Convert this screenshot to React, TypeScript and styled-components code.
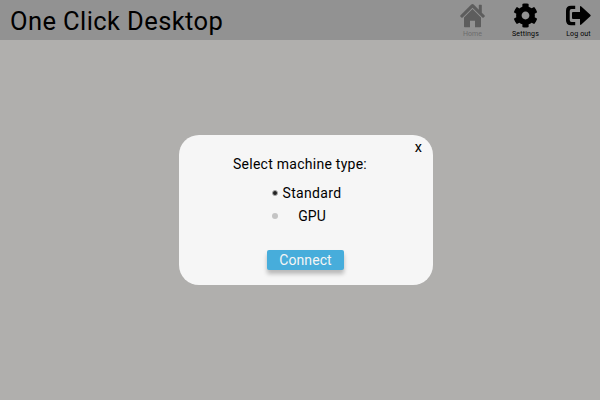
import React from "react";
import styled, { createGlobalStyle } from "styled-components";
import { FaCog } from "react-icons/fa";

const GlobalStyle = createGlobalStyle`
  * { box-sizing: border-box; }
  body { margin: 0; font-family: Roboto, "Noto Sans", sans-serif; color: #000; }
`;
const Page = styled.div`
  display: flex;
  flex-direction: column;
  width: 600px;
  height: 400px;
  overflow: hidden;
  background: #b0afad;
`;
const Header = styled.header`
  display: flex;
  justify-content: space-between;
  flex: 0 0 40px;
  height: 40px;
  padding-left: 10px;
  background: #929292;
`;
const Title = styled.h1`
  margin: 0;
  padding-top: 2px;
  font-size: 25.5px;
  font-weight: 400;
  line-height: 38px;
  letter-spacing: 0.4px;
  white-space: nowrap;
`;
const Nav = styled.nav`
  display: flex;
  margin-right: -5px;
`;
const NavItem = styled.div<{ $muted?: boolean; $spacing: number }>`
  display: flex;
  flex-direction: column;
  align-items: center;
  width: 53px;
  color: ${(p) => (p.$muted ? "#5d5d5d" : "#000")};
  svg { display: block; width: 25px; height: 25px; margin-top: 3px; }
  span {
    margin-top: 1px;
    font-size: 7px;
    line-height: 10px;
    letter-spacing: ${(p) => p.$spacing}px;
    opacity: ${(p) => (p.$muted ? 0.7 : 1)};
    white-space: nowrap;
  }
`;
const Main = styled.main`
  display: flex;
  flex: 1;
  align-items: flex-start;
  padding: 95px 0 0 179px;
`;
const Dialog = styled.section`
  display: flex;
  flex-direction: column;
  width: 254px;
  height: 150px;
  border-radius: 20px;
  background: #f6f6f6;
`;
const Close = styled.button`
  align-self: flex-end;
  height: 16px;
  margin: 5px 11px 0 0;
  padding: 0;
  border: 0;
  background: none;
  font: 400 14.5px/16px Roboto, sans-serif;
  color: #000;
`;
const Prompt = styled.p`
  margin: -2px 0 0 54px;
  font-size: 14px;
  line-height: 20px;
  letter-spacing: 0.26px;
  white-space: nowrap;
`;
const Options = styled.div`
  display: flex;
  flex-direction: column;
  margin: 8px 0 0 93px;
`;
const Option = styled.label`
  display: flex;
  align-items: center;
  height: 23px;
`;
const Dot = styled.i<{ $selected?: boolean }>`
  width: 6px;
  height: 6px;
  margin-top: -1px;
  border-radius: 50%;
  border: ${(p) => (p.$selected ? "1px solid #aaa" : "0")};
  background: ${(p) => (p.$selected ? "#222" : "#c4c4c4")};
`;
const OptionText = styled.span<{ $spacing: number }>`
  width: 60px;
  margin-left: 4px;
  font-size: 14px;
  line-height: 23px;
  letter-spacing: ${(p) => p.$spacing}px;
  text-align: center;
  white-space: nowrap;
`;
const Connect = styled.button`
  width: 77px;
  height: 20px;
  margin: 22px 0 0 88px;
  padding: 0;
  border: 0;
  border-radius: 2px;
  background: #47addb;
  box-shadow: 0 4px 4px rgba(0, 0, 0, 0.25);
  font: 400 14px/20px Roboto, sans-serif;
  letter-spacing: 0.1px;
  color: #f5f5f5;
`;

const HomeIcon = () => (
  <svg viewBox="0 0 25 25" fill="currentColor">
    <path d="M12.5 1Q13.1 1 13.7 1.6L18.8 6.7V2.2Q18.8 1.7 19.3 1.7H21.3Q21.8 1.7 21.8 2.2V9.7L24.7 12.6Q25 13 24.7 13.4L23.4 14.7Q23 15 22.6 14.7L12.5 4.7L2.4 14.7Q2 15 1.6 14.7L.3 13.4Q0 13 .3 12.6L11.3 1.6Q11.9 1 12.5 1Z" />
    <path d="M12.5 6.1L21 14.5V23.5Q21 24.3 20.2 24.3H15V17.7H10V24.3H4.8Q4 24.3 4 23.5V14.5Z" />
  </svg>
);

const LogoutIcon = () => (
  <svg viewBox="0 0 25 25" fill="currentColor">
    <path d="M9.2 2.7V6.1H5.6Q3.7 6.1 3.7 8V17Q3.7 18.9 5.6 18.9H9.2V22.3H5Q0 22.3 0 17.3V7.7Q0 2.7 5 2.7Z" />
    <path d="M7 8.9H14V4Q14 2.3 15.3 3.5L24.3 11.7Q25.1 12.5 24.3 13.3L15.3 21.5Q14 22.7 14 21V16.1H7Q6 16.1 6 15.1V9.9Q6 8.9 7 8.9Z" />
  </svg>
);

export default function App() {
  return (
    <Page>
      <GlobalStyle />
      <Header>
        <Title>One Click Desktop</Title>
        <Nav>
          <NavItem $muted $spacing={0.1}><HomeIcon /><span>Home</span></NavItem>
          <NavItem $spacing={0.2}><FaCog /><span>Settings</span></NavItem>
          <NavItem $spacing={0.15}><LogoutIcon /><span>Log out</span></NavItem>
        </Nav>
      </Header>
      <Main>
        <Dialog>
          <Close>x</Close>
          <Prompt>Select machine type:</Prompt>
          <Options>
            <Option><Dot $selected /><OptionText $spacing={0.35}>Standard</OptionText></Option>
            <Option><Dot /><OptionText $spacing={0}>GPU</OptionText></Option>
          </Options>
          <Connect>Connect</Connect>
        </Dialog>
      </Main>
    </Page>
  );
}
